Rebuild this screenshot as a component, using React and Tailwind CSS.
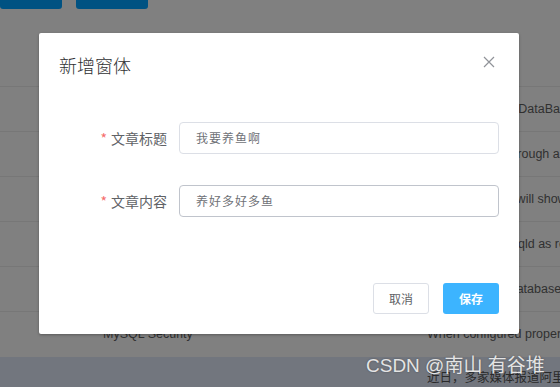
export default function App() {
  const rows = [
    { left: "", right: "" },
    { left: "MySQL Overview", right: "About a MySQL DataBase server" },
    { left: "MySQL Connection", right: "Connects to it through a socket" },
    { left: "MySQL Logging", right: "The server logs will show errors" },
    { left: "MySQL Users", right: "Do not start mysqld as root user" },
    { left: "MySQL Backup", right: "Back up every database often" },
  ];
  return (
    <div className="relative w-[560px] h-[387px] overflow-hidden bg-[#808080] font-['Liberation_Sans','Noto_Sans_CJK_SC',sans-serif]">
      {/* page behind overlay */}
      <div className="flex flex-col h-full">
        <div className="flex gap-[14px] h-[42px] shrink-0">
          <div className="w-[62px] h-[9px] bg-[#005282] rounded-b-[3px]" />
          <div className="w-[72px] h-[9px] bg-[#005282] rounded-b-[3px]" />
        </div>
        {rows.map((r, i) => (
          <div key={i} className="flex items-center h-[45px] shrink-0 border-b border-[#777777] text-[12.5px] text-[#303030]">
            <div className="w-[427px] shrink-0 pl-[103px] whitespace-nowrap">{r.left}</div>
            <div className="shrink-0 whitespace-nowrap">{r.right}</div>
          </div>
        ))}
        <div className="flex items-center h-[45px] shrink-0 text-[12.5px] text-[#303030]">
          <div className="w-[427px] shrink-0 pl-[103px] whitespace-nowrap">MySQL Security</div>
          <div className="shrink-0 whitespace-nowrap">When configured properly</div>
        </div>
        <div className="flex-1 bg-[#72767e] pt-[12px] pl-[427px] text-[12.5px] text-[#2a2a2a] whitespace-nowrap overflow-hidden">
          近日，多家媒体报道阿里巴巴
        </div>
      </div>

      {/* watermark */}
      <div className="absolute left-[366px] top-[352px] text-[19px] text-[#e4e4e4] whitespace-nowrap [text-shadow:0_0_2px_rgba(0,0,0,0.35)]">
        CSDN @南山 有谷堆
      </div>

      {/* dialog */}
      <div className="absolute left-[39px] top-[33px] w-[480px] h-[301px] bg-white rounded-[2px] shadow-[0_1px_3px_rgba(0,0,0,0.3)] flex flex-col font-['Noto_Sans_CJK_SC',sans-serif]">
        <div className="relative pt-[20px] px-[20px] pb-[10px]">
          <div className="text-[18px] leading-[24px] font-light text-[#303133]">新增窗体</div>
          <button className="absolute right-[24px] top-[23px] w-[12px] h-[12px] flex items-center justify-center">
            <svg width="12" height="12" viewBox="0 0 12 12" fill="none">
              <path d="M1 1L11 11M11 1L1 11" stroke="#909399" strokeWidth="1.2" />
            </svg>
          </button>
        </div>
        <div className="px-[20px] pt-[35px] flex flex-col gap-[31px]">
          <div className="flex items-center">
            <div className="w-[120px] pr-[12px] text-right text-[14px] text-[#606266] leading-[32px]">
              <span className="text-[#F56C6C] mr-[4px]">*</span>文章标题
            </div>
            <div className="w-[320px] h-[32px] border border-[#DCDFE6] rounded-[4px] flex items-center pl-[16px] text-[12px] tracking-[1px] text-[#707277]">
              我要养鱼啊
            </div>
          </div>
          <div className="flex items-center">
            <div className="w-[120px] pr-[12px] text-right text-[14px] text-[#606266] leading-[32px]">
              <span className="text-[#F56C6C] mr-[4px]">*</span>文章内容
            </div>
            <div className="w-[320px] h-[32px] border border-[#C0C4CC] rounded-[4px] flex items-center pl-[16px] text-[12px] tracking-[1px] text-[#707277]">
              养好多好多鱼
            </div>
          </div>
        </div>
        <div className="mt-auto pb-[20px] px-[20px] flex justify-end gap-[14px]">
          <button className="w-[56px] h-[31px] border border-[#DCDFE6] rounded-[3px] bg-white text-[12px] text-[#606266]">
            取消
          </button>
          <button className="w-[56px] h-[31px] rounded-[3px] bg-[#3cb4ff] text-[12px] font-bold text-white">
            保存
          </button>
        </div>
      </div>
    </div>
  );
}
